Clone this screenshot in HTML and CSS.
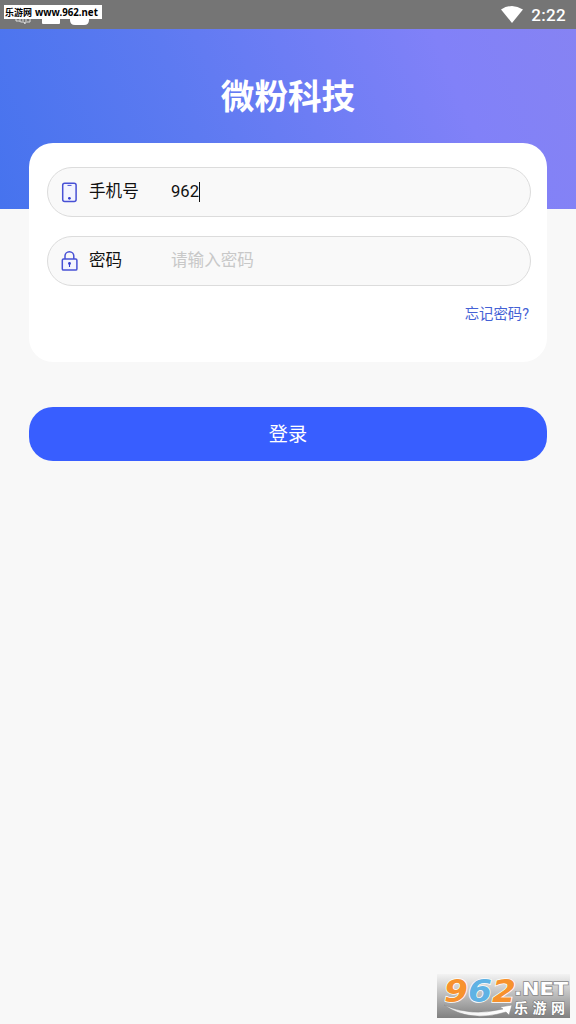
FILE: index.html
```
<!DOCTYPE html>
<html lang="zh-CN">
<head>
	<meta charset="utf-8">
	<meta name="viewport" content="width=device-width, initial-scale=1">
	<title>微粉科技</title>
	<link rel="stylesheet" href="styles.css">
</head>
<body>
	<div class="status">
		<svg class="notice" width="68" height="25" viewBox="0 0 68 25">
			<path d="M-1 19v2h3l2 1h3l1 2v-2h5v-4M3 18v3M6 18v3M9 18v3" fill="none" stroke="#dedede"/>
			<path d="M25 15h18v8q0 1-1 1H26q-1 0-1-1z" fill="#fff"/>
			<path d="M53 15h19v5q0 5-5 5h-9q-5 0-5-5z" fill="#fff"/>
		</svg>
		<svg class="wifi" width="22" height="17" viewBox="0 0 22 17">
			<path d="M0 3.5Q11-3.5 22 3.5L11 17z" fill="#fff"/>
		</svg>
		<span class="time">2:22</span>
		<div class="site">乐游网<span class="url">www.962.net</span></div>
	</div>

	<div class="top">
		<h1>微粉科技</h1>
	</div>

	<div class="card">
		<label class="field">
			<svg class="icon" width="17" height="21" viewBox="0 0 17 21">
				<rect x="1.7" y="1.2" width="13.4" height="18.3" rx="2" fill="#f3f4ff" stroke="#4851d5" stroke-width="1.5"/>
				<path d="M6.5 3.4h4" stroke="#4851d5" stroke-width="1"/>
				<circle cx="8.4" cy="16.3" r="1.4" fill="#343ed0"/>
			</svg>
			<span class="name">手机号</span>
			<span class="value">962<i class="caret"></i></span>
		</label>
		<label class="field">
			<svg class="icon" width="17" height="21" viewBox="0 0 17 21">
				<path d="M4 8.2V5.2a4.4 4.4 0 0 1 8.8 0v3" fill="none" stroke="#4851d5" stroke-width="1.5"/>
				<rect x="1.3" y="8" width="14.6" height="11.1" rx="1.2" fill="#f3f4ff" stroke="#4851d5" stroke-width="1.5"/>
				<circle cx="8.5" cy="12.5" r="1.4" fill="#343ed0"/>
				<path d="M8.5 13v3" stroke="#343ed0" stroke-width="1.1"/>
			</svg>
			<span class="name">密码</span>
			<span class="value hint">请输入密码</span>
		</label>
		<a class="forget">忘记密码?</a>
	</div>

	<button class="login">登录</button>

	<svg class="mark" width="133" height="44" viewBox="0 0 133 44">
		<defs>
			<linearGradient id="grey" x1="0" y1="0" x2="0" y2="1">
				<stop offset="0" stop-color="#f3f3f3"/>
				<stop offset="1" stop-color="#808080"/>
			</linearGradient>
			<linearGradient id="swoosh" x1="0" y1="0" x2="1" y2="0">
				<stop offset="0" stop-color="#ddd"/>
				<stop offset=".3" stop-color="#f5f5f5"/>
				<stop offset="1" stop-color="#fff"/>
			</linearGradient>
		</defs>
		<rect width="133" height="44" fill="url(#grey)"/>
		<path d="M7 31Q34 43 66 35L63 33L75 31L72 41L69 38Q32 49 7 31z" fill="url(#swoosh)" stroke="#888" stroke-width=".5"/>
		<g class="digits">
			<text x="7" y="28" textLength="24" lengthAdjust="spacingAndGlyphs" fill="#f7922d">9</text>
			<text x="31" y="28" textLength="24" lengthAdjust="spacingAndGlyphs" fill="#5fb2e4">6</text>
			<text x="55" y="28" textLength="24" lengthAdjust="spacingAndGlyphs" fill="#f7922d">2</text>
		</g>
		<text class="net" x="77" y="21" textLength="54" lengthAdjust="spacingAndGlyphs">.NET</text>
		<text class="cn" x="77" y="39" textLength="51">乐游网</text>
	</svg>
</body>
</html>
```

FILE: styles.css
```
*{
	box-sizing: border-box;
}
body{
	margin: 0;
	min-height: 1024px;
	background: #f8f8f8;
	font-family: Roboto, "Noto Sans CJK SC", sans-serif;
	color: #111;
}
.status{
	position: relative;
	display: flex;
	align-items: center;
	height: 29px;
	padding: 0 10px 0 17px;
	background: #757575;
}
.notice{
	overflow: visible;
	align-self: flex-start;
}
.wifi{
	margin-left: auto;
	margin-right: 8px;
}
.time{
	padding-top: 1px;
	font-size: 17px;
	font-weight: 500;
	letter-spacing: .3px;
	color: #fff;
}
.site{
	position: absolute;
	left: 4px;
	top: 5px;
	display: flex;
	gap: 3px;
	width: 98px;
	height: 14px;
	padding-left: 1px;
	background: #fff;
	color: #000;
	font: bold 9px/15px "Noto Sans CJK SC", sans-serif;
	white-space: nowrap;
}
.url{
	font: bold 9.7px/15px "Noto Sans", sans-serif;
}
.top{
	height: 180px;
	padding-top: 44px;
	background: linear-gradient(68deg, #4673ee 0%, #5d7af1 35%, #8181f8 78%, #8683f3 100%);
}
h1{
	margin: 0;
	font-size: 33.6px;
	line-height: 50px;
	text-align: center;
	color: #fff;
}
.card{
	display: flex;
	flex-direction: column;
	gap: 19px;
	height: 219px;
	margin: -66px 29px 0;
	padding: 24px 16px 0 18px;
	background: #fff;
	border-radius: 24px;
}
.field{
	display: flex;
	align-items: center;
	height: 50px;
	flex: none;
	padding-left: 13px;
	background: #f9f9f9;
	border: 1px solid #dcdcdc;
	border-radius: 25px;
	font-size: 16.6px;
	line-height: 24px;
}
.name{
	width: 82px;
	margin-left: 11px;
	margin-top: -1px;
}
.value{
	display: flex;
	align-items: center;
}
.hint{
	margin-top: -1px;
	color: #c8c8c8;
}
.caret{
	width: 1px;
	height: 20px;
	background: #111;
}
.forget{
	align-self: flex-end;
	margin-top: -2px;
	margin-right: 2px;
	font-size: 14.4px;
	line-height: 24px;
	color: #4461d5;
}
.login{
	display: block;
	width: 518px;
	height: 54px;
	margin: 45px auto 0;
	padding: 2px 0 0;
	border: none;
	border-radius: 24px;
	background: #385eff;
	color: #fff;
	font: 19.2px/52px Roboto, "Noto Sans CJK SC", sans-serif;
}
.mark{
	position: absolute;
	left: 437px;
	top: 974px;
	overflow: visible;
}
.digits{
	font: italic bold 32px "DejaVu Sans", sans-serif;
	stroke: #fff;
	stroke-width: 1.5px;
	paint-order: stroke;
}
.net{
	font: bold 18px "DejaVu Sans", sans-serif;
	fill: #fff;
	stroke: #888;
	stroke-width: 1.4px;
	paint-order: stroke;
}
.cn{
	font: bold 14px "Noto Sans CJK SC", sans-serif;
	fill: #fff;
	stroke: #777;
	stroke-width: 1.2px;
	paint-order: stroke;
}
```
